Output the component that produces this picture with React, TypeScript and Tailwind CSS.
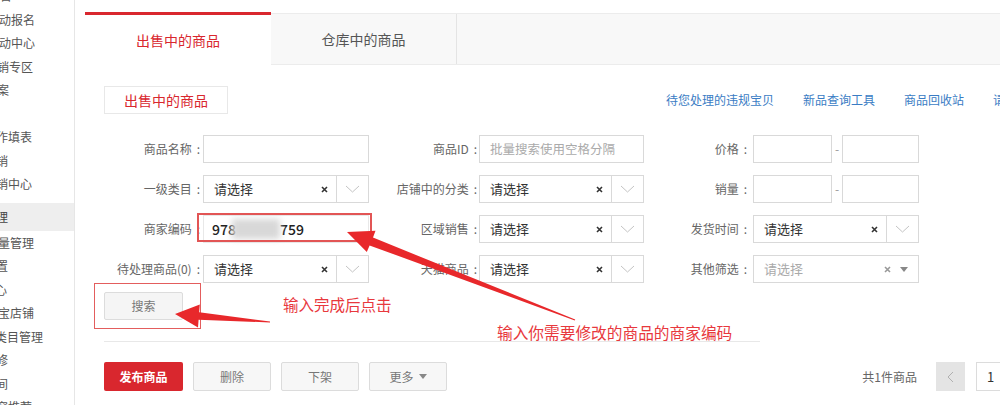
import React from "react"

const sideItems = [
  { t: "平台", o: "-ml-[12px]" },
  { t: "活动报名", o: "-ml-[13px]" },
  { t: "活动中心", o: "-ml-[13px]" },
  { t: "营销专区", o: "-ml-[15px]" },
  { t: "方案", o: "-ml-[15px]" },
  { t: "", o: "" },
  { t: "制作填表", o: "-ml-[16px]" },
  { t: "促销", o: "-ml-[16px]" },
  { t: "营销中心", o: "-ml-[16px]" },
]

const sideItems2 = [
  { t: "库存量管理", o: "-ml-[26px]" },
  { t: "运费设置", o: "-ml-[40px]" },
  { t: "客服中心", o: "-ml-[41px]" },
  { t: "淘宝店铺", o: "-ml-[14px]" },
  { t: "店铺类目管理", o: "-ml-[29px]" },
  { t: "店铺装修", o: "-ml-[40px]" },
  { t: "发货时间", o: "-ml-[40px]" },
  { t: "橱窗推荐", o: "-ml-[16px]" },
]

const Chevron = () => (
  <svg width="15" height="8" viewBox="0 0 15 8">
    <path d="M1 1l6.5 6 6.5-6" stroke="#c4c4c4" strokeWidth="1" fill="none" />
  </svg>
)

const Cross = ({ color = "#333" }: { color?: string }) => (
  <svg width="7" height="7" viewBox="0 0 7 7">
    <path d="M1 1l5 5M6 1L1 6" stroke={color} strokeWidth="1.6" fill="none" />
  </svg>
)

const TriDown = ({ color = "#777" }: { color?: string }) => (
  <svg width="8" height="5" viewBox="0 0 8 5">
    <polygon points="0,0 8,0 4,5" fill={color} />
  </svg>
)

const Label = ({ w, text }: { w: string; text: string }) => (
  <div className={`${w} shrink-0 text-right text-[12px] text-[#666] whitespace-nowrap`}>
    <span>{text}</span>
    <span className="ml-[5px]">:</span>
  </div>
)

const Input = ({ placeholder }: { placeholder?: string }) => (
  <div className="flex h-full w-full items-center border border-[#d9d9d9] bg-white pl-[10px] text-[12.5px] text-[#aaa]">
    {placeholder}
  </div>
)

const Select = () => (
  <div className="flex h-full w-full border border-[#d9d9d9] bg-white">
    <div className="flex flex-1 items-center pl-[10px] pr-[8px] text-[13px] text-[#333]">
      <span>请选择</span>
      <span className="ml-auto flex"><Cross /></span>
    </div>
    <div className="flex w-[32px] items-center justify-center border-l border-[#d9d9d9]">
      <Chevron />
    </div>
  </div>
)

const Range = () => (
  <div className="flex h-full items-center">
    <div className="h-full w-[79px] border border-[#d9d9d9]" />
    <div className="w-[10px] text-center text-[12px] text-[#999]">-</div>
    <div className="h-full w-[77px] border border-[#d9d9d9]" />
  </div>
)

export default function App() {
  return (
    <div className="relative flex h-[405px] w-[1000px] overflow-hidden bg-white font-['Noto_Sans_CJK_SC','Noto_Sans',sans-serif]">
      {/* left menu, cropped */}
      <aside className="w-[75px] shrink-0 overflow-hidden border-r border-[#e6e6e6]">
        <div className="-mt-[15.5px] flex flex-col">
          {sideItems.map((it, i) => (
            <div key={i} className="flex h-[23.5px] items-center overflow-hidden whitespace-nowrap text-[12px] text-[#555]">
              <span className={it.o}>{it.t}</span>
            </div>
          ))}
          <div className="mt-[7px] flex h-[28px] items-center overflow-hidden whitespace-nowrap bg-[#eeeeee] text-[12px] text-[#444]">
            <span className="-ml-[40px]">商品管理</span>
          </div>
          {sideItems2.map((it, i) => (
            <div key={i} className="flex h-[23.5px] items-center overflow-hidden whitespace-nowrap text-[12px] text-[#555]">
              <span className={it.o}>{it.t}</span>
            </div>
          ))}
        </div>
      </aside>

      <main className="ml-[10px] flex w-[960px] shrink-0 flex-col">
        {/* tabs */}
        <div className="mt-[12px] flex h-[53px]">
          <div className="flex w-[186px] items-center justify-center border-t-[3px] border-[#d9272e] text-[14px] text-[#d9272e]">
            出售中的商品
          </div>
          <div className="mt-px flex flex-1 border-t border-b border-[#ececec] bg-[#f8f8f8]">
            <div className="flex w-[186px] items-center justify-center border-r border-[#e4e4e4] text-[14px] text-[#555]">
              仓库中的商品
            </div>
          </div>
        </div>

        {/* sub tab + links */}
        <div className="mt-[21px] flex h-[28px] items-center">
          <div className="ml-[19px] flex h-full w-[124px] items-center justify-center border border-[#e8e8e8] text-[14px] text-[#d9272e]">
            出售中的商品
          </div>
          <div className="ml-auto flex gap-[29px] whitespace-nowrap pr-[16px] text-[12px] text-[#3a7cc4]">
            <span>待您处理的违规宝贝</span>
            <span>新品查询工具</span>
            <span>商品回收站</span>
            <span>请检查</span>
          </div>
        </div>

        {/* filter form */}
        <div className="mt-[21px] flex flex-col gap-[12px]">
          <div className="flex h-[28px]">
            <div className="flex items-center">
              <Label w="w-[115px]" text="商品名称" />
              <div className="ml-[3px] h-full w-[166px]"><Input /></div>
            </div>
            <div className="flex items-center">
              <Label w="w-[108px]" text="商品ID" />
              <div className="ml-[2px] h-full w-[165px]"><Input placeholder="批量搜索使用空格分隔" /></div>
            </div>
            <div className="flex items-center">
              <Label w="w-[103px]" text="价格" />
              <div className="ml-[6px] h-full"><Range /></div>
            </div>
          </div>

          <div className="flex h-[28px]">
            <div className="flex items-center">
              <Label w="w-[115px]" text="一级类目" />
              <div className="ml-[3px] h-full w-[166px]"><Select /></div>
            </div>
            <div className="flex items-center">
              <Label w="w-[108px]" text="店铺中的分类" />
              <div className="ml-[2px] h-full w-[165px]"><Select /></div>
            </div>
            <div className="flex items-center">
              <Label w="w-[103px]" text="销量" />
              <div className="ml-[6px] h-full"><Range /></div>
            </div>
          </div>

          <div className="flex h-[28px]">
            <div className="flex items-center">
              <Label w="w-[115px]" text="商家编码" />
              <div className="relative ml-[3px] h-full w-[166px]">
                <div className="flex h-full w-full items-center border border-[#e8e8e8] bg-white pl-[8px] text-[14px] font-medium text-[#222]">
                  <span>978</span>
                  <span className="-ml-[4px] inline-block h-[20px] w-[48px] bg-[#d8d8d8] blur-[3px]" />
                  <span>759</span>
                </div>
                <div className="absolute -left-[6px] -top-[2px] h-[29px] w-[175px] border-2 border-[#e25555]" />
              </div>
            </div>
            <div className="flex items-center">
              <Label w="w-[108px]" text="区域销售" />
              <div className="ml-[2px] h-full w-[165px]"><Select /></div>
            </div>
            <div className="flex items-center">
              <Label w="w-[103px]" text="发货时间" />
              <div className="ml-[6px] h-full w-[166px]"><Select /></div>
            </div>
          </div>

          <div className="flex h-[28px]">
            <div className="flex items-center">
              <Label w="w-[115px]" text="待处理商品(0)" />
              <div className="ml-[3px] h-full w-[166px]"><Select /></div>
            </div>
            <div className="flex items-center">
              <Label w="w-[108px]" text="天猫商品" />
              <div className="ml-[2px] h-full w-[165px]"><Select /></div>
            </div>
            <div className="flex items-center">
              <Label w="w-[103px]" text="其他筛选" />
              <div className="ml-[6px] flex h-full w-[166px] items-center border border-[#d9d9d9] bg-white pl-[10px] pr-[10px] text-[13px] text-[#aaa]">
                <span>请选择</span>
                <span className="ml-auto flex"><Cross color="#999" /></span>
                <span className="ml-[9px] flex"><TriDown color="#888" /></span>
              </div>
            </div>
          </div>
        </div>

        {/* search */}
        <div className="relative ml-[19px] mt-[9px] h-[28px] w-[79px]">
          <div className="flex h-full w-full items-center justify-center rounded-[2px] border border-[#dcdcdc] bg-[#f5f5f5] text-[12px] text-[#777]">
            搜索
          </div>
          <div className="absolute -left-[10px] -top-[9px] h-[46px] w-[107px] border-[1.5px] border-[#e35d5d]" />
        </div>

        <div className="ml-[19px] mt-[21px] h-px w-[656px] bg-[#e8e8e8]" />

        {/* actions + pager */}
        <div className="mt-[20px] flex h-[29px] items-center">
          <div className="ml-[19px] flex h-full gap-[10px] text-[12px]">
            <div className="flex w-[79px] items-center justify-center rounded-[2px] bg-[#d9272e] font-bold text-white">发布商品</div>
            <div className="flex w-[78px] items-center justify-center rounded-[2px] border border-[#dcdcdc] bg-[#f7f7f7] text-[#777]">删除</div>
            <div className="flex w-[78px] items-center justify-center rounded-[2px] border border-[#dcdcdc] bg-[#f7f7f7] text-[#777]">下架</div>
            <div className="flex w-[78px] items-center justify-center gap-[5px] rounded-[2px] border border-[#dcdcdc] bg-[#f7f7f7] text-[#777]">
              更多 <TriDown color="#888" />
            </div>
          </div>
          <div className="ml-auto flex h-full items-center">
            <span className="text-[12px] text-[#666]">共1件商品</span>
            <div className="ml-[19px] flex h-full w-[29px] items-center justify-center bg-[#e4e4e4]">
              <svg width="7" height="12" viewBox="0 0 7 12">
                <path d="M6 1L1 6l5 5" stroke="#b0b0b0" strokeWidth="1" fill="none" />
              </svg>
            </div>
            <div className="ml-[11px] flex h-full w-[29px] items-center justify-center border border-[#dcdcdc] text-[13px] text-[#333]">1</div>
            <div className="ml-[11px] flex h-full w-[29px] items-center justify-center border border-[#dcdcdc]">
              <svg width="7" height="12" viewBox="0 0 7 12">
                <path d="M1 1l5 5-5 5" stroke="#999" strokeWidth="1" fill="none" />
              </svg>
            </div>
          </div>
        </div>
      </main>

      {/* annotations drawn over the page */}
      <svg className="pointer-events-none absolute left-0 top-0" width="1000" height="405" viewBox="0 0 1000 405">
        <polygon
          points="347,232 375.5,230.8 373,237.6 575.2,319.5 574.8,320.5 369.6,245.4 366.8,252"
          fill="#e8282b"
        />
        <polygon
          points="175,314 199.8,304.5 199.2,312.3 270,321.5 270,322.5 198.6,319.7 198,327.5"
          fill="#e8282b"
        />
      </svg>
      <div className="absolute left-[283px] top-[297px] whitespace-nowrap text-[15.5px] leading-none text-[#e8383d]">
        输入完成后点击
      </div>
      <div className="absolute left-[497px] top-[325px] whitespace-nowrap text-[15.7px] leading-none text-[#e8383d]">
        输入你需要修改的商品的商家编码
      </div>
    </div>
  )
}
